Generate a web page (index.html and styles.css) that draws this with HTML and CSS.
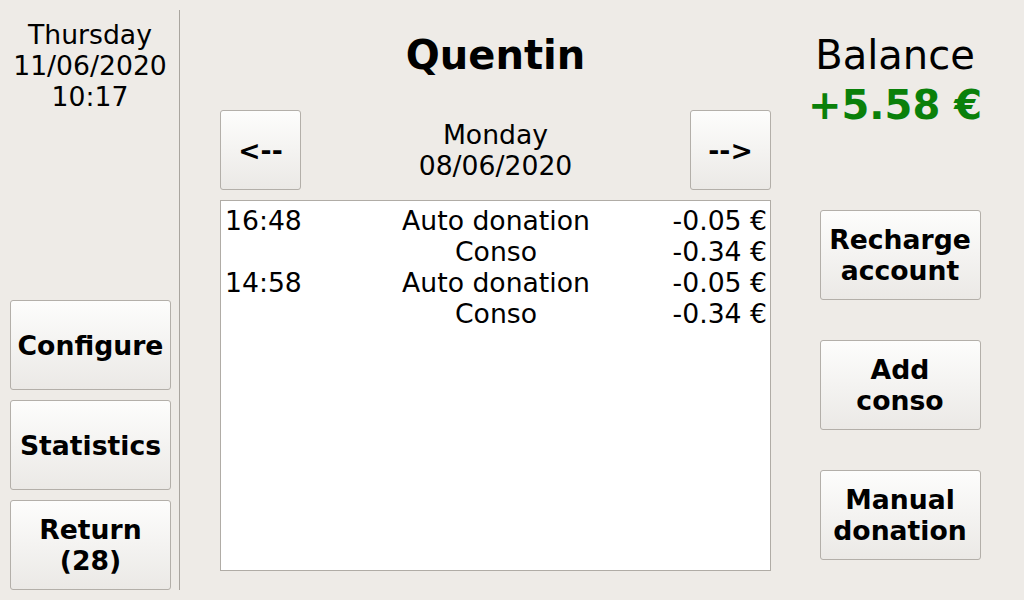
FILE: index.html
```html
<!DOCTYPE html>
<html>
<head>
<meta charset="utf-8">
<link rel="stylesheet" href="styles.css">
</head>
<body>
<div class="app">
  <div class="side">
    <div class="date">Thursday<br>11/06/2020<br>10:17</div>
    <div class="side-buttons">
      <button class="btn">Configure</button>
      <button class="btn">Statistics</button>
      <button class="btn">Return<br>(28)</button>
    </div>
  </div>
  <div class="sep"></div>
  <div class="main">
    <div class="title">Quentin</div>
    <div class="nav">
      <button class="btn nav-btn">&lt;--</button>
      <div class="day">Monday<br>08/06/2020</div>
      <button class="btn nav-btn">--&gt;</button>
    </div>
    <div class="list">
      <div class="row"><span class="time">16:48</span><span class="desc">Auto donation</span><span class="amount">-0.05 €</span></div>
      <div class="row"><span class="desc">Conso</span><span class="amount">-0.34 €</span></div>
      <div class="row"><span class="time">14:58</span><span class="desc">Auto donation</span><span class="amount">-0.05 €</span></div>
      <div class="row"><span class="desc">Conso</span><span class="amount">-0.34 €</span></div>
    </div>
  </div>
  <div class="right">
    <div class="balance-label">Balance</div>
    <div class="balance-amount">+5.58 €</div>
    <div class="right-buttons">
      <button class="btn">Recharge<br>account</button>
      <button class="btn">Add<br>conso</button>
      <button class="btn">Manual<br>donation</button>
    </div>
  </div>
</div>
</body>
</html>
```
FILE: styles.css
```css
html, body {
  margin: 0;
  padding: 0;
}
body {
  background: #eeebe7;
  font-family: "DejaVu Sans", sans-serif;
  font-size: 26.67px;
  line-height: 31px;
  color: #000;
  width: 1024px;
  height: 600px;
  overflow: hidden;
}
.app {
  display: flex;
  height: 600px;
}
.side {
  width: 179px;
  box-sizing: border-box;
  padding: 19px 0 10px 10px;
  display: flex;
  flex-direction: column;
}
.date {
  width: 160px;
  text-align: center;
}
.side-buttons {
  margin-top: auto;
  display: flex;
  flex-direction: column;
  gap: 10px;
}
.btn {
  width: 161px;
  height: 90px;
  box-sizing: border-box;
  border: 1px solid #b3afa9;
  border-radius: 3px;
  background: linear-gradient(to bottom, #fdfdfc 0%, #f4f3f1 50%, #ebe9e6 100%);
  font-family: "DejaVu Sans", sans-serif;
  font-size: 26.67px;
  font-weight: bold;
  line-height: 31px;
  color: #000;
  padding: 0;
  margin: 0;
  text-align: center;
}
.sep {
  width: 1px;
  background: #a9a59f;
  margin: 10px 0;
}
.main {
  width: 551px;
  margin-left: 40px;
  padding-top: 32px;
  display: flex;
  flex-direction: column;
}
.title {
  font-size: 40px;
  font-weight: bold;
  line-height: 46px;
  text-align: center;
}
.nav {
  margin-top: 32px;
  height: 80px;
  display: flex;
  justify-content: space-between;
  align-items: center;
}
.nav-btn {
  width: 81px;
  height: 80px;
}
.day {
  text-align: center;
}
.list {
  margin-top: 10px;
  height: 371px;
  box-sizing: border-box;
  border: 1px solid #b0aca6;
  background: #fff;
  padding: 4px 3px 0 4px;
}
.row {
  display: grid;
  grid-template-columns: 1fr;
  height: 31px;
}
.row > span {
  grid-row: 1;
  grid-column: 1;
  white-space: nowrap;
}
.time { justify-self: start; }
.desc { justify-self: center; }
.amount { justify-self: end; }
.right {
  width: 240px;
  margin-left: 9px;
  padding-top: 32px;
  display: flex;
  flex-direction: column;
  align-items: center;
}
.balance-label {
  font-size: 40px;
  line-height: 46px;
  padding-right: 10px;
}
.balance-amount {
  margin-top: 4px;
  font-size: 40px;
  line-height: 46px;
  font-weight: bold;
  color: #0a800a;
  padding-right: 10px;
}
.right-buttons {
  margin-top: 82px;
  display: flex;
  flex-direction: column;
  gap: 40px;
}
```
